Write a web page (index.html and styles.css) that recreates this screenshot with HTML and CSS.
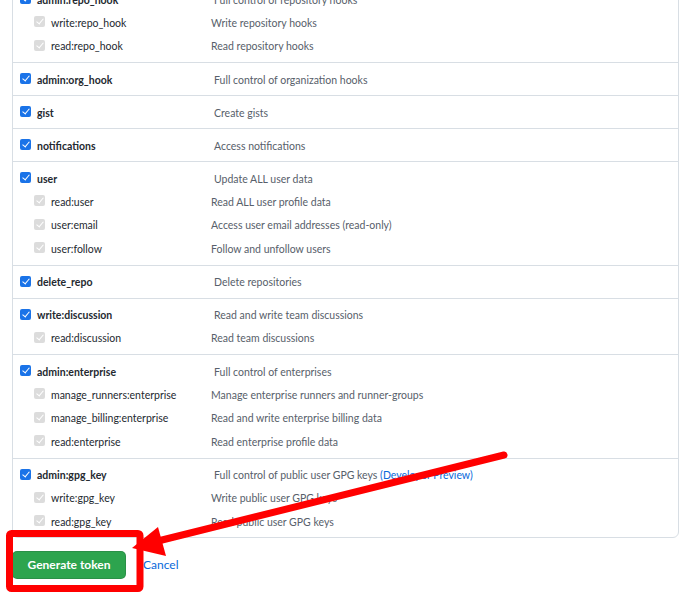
FILE: index.html
```html
<!DOCTYPE html>
<html lang="en">
<head>
<meta charset="utf-8">
<title>New personal access token</title>
<link rel="stylesheet" href="styles.css">
</head>
<body>
<div class="page">
  <div class="scopes">
    <div class="group">
      <div class="row parent"><span class="cb on"></span><span class="name">admin:repo_hook</span><span class="desc">Full control of repository hooks</span></div>
      <div class="row child"><span class="cb off"></span><span class="name">write:repo_hook</span><span class="desc">Write repository hooks</span></div>
      <div class="row child"><span class="cb off"></span><span class="name">read:repo_hook</span><span class="desc">Read repository hooks</span></div>
    </div>
    <div class="group">
      <div class="row parent"><span class="cb on"></span><span class="name">admin:org_hook</span><span class="desc">Full control of organization hooks</span></div>
    </div>
    <div class="group">
      <div class="row parent"><span class="cb on"></span><span class="name">gist</span><span class="desc">Create gists</span></div>
    </div>
    <div class="group">
      <div class="row parent"><span class="cb on"></span><span class="name">notifications</span><span class="desc">Access notifications</span></div>
    </div>
    <div class="group">
      <div class="row parent"><span class="cb on"></span><span class="name">user</span><span class="desc">Update ALL user data</span></div>
      <div class="row child"><span class="cb off"></span><span class="name">read:user</span><span class="desc">Read ALL user profile data</span></div>
      <div class="row child"><span class="cb off"></span><span class="name">user:email</span><span class="desc">Access user email addresses (read-only)</span></div>
      <div class="row child"><span class="cb off"></span><span class="name">user:follow</span><span class="desc">Follow and unfollow users</span></div>
    </div>
    <div class="group">
      <div class="row parent"><span class="cb on"></span><span class="name">delete_repo</span><span class="desc">Delete repositories</span></div>
    </div>
    <div class="group">
      <div class="row parent"><span class="cb on"></span><span class="name">write:discussion</span><span class="desc">Read and write team discussions</span></div>
      <div class="row child"><span class="cb off"></span><span class="name">read:discussion</span><span class="desc">Read team discussions</span></div>
    </div>
    <div class="group">
      <div class="row parent"><span class="cb on"></span><span class="name">admin:enterprise</span><span class="desc">Full control of enterprises</span></div>
      <div class="row child"><span class="cb off"></span><span class="name">manage_runners:enterprise</span><span class="desc">Manage enterprise runners and runner-groups</span></div>
      <div class="row child"><span class="cb off"></span><span class="name">manage_billing:enterprise</span><span class="desc">Read and write enterprise billing data</span></div>
      <div class="row child"><span class="cb off"></span><span class="name">read:enterprise</span><span class="desc">Read enterprise profile data</span></div>
    </div>
    <div class="group last">
      <div class="row parent"><span class="cb on"></span><span class="name">admin:gpg_key</span><span class="desc">Full control of public user GPG keys <a class="link" href="#">(Developer Preview)</a></span></div>
      <div class="row child"><span class="cb off"></span><span class="name">write:gpg_key</span><span class="desc">Write public user GPG keys</span></div>
      <div class="row child"><span class="cb off"></span><span class="name">read:gpg_key</span><span class="desc">Read public user GPG keys</span></div>
    </div>
  </div>
  <div class="actions">
    <button class="btn-primary" type="button">Generate token</button>
    <a class="cancel" href="#">Cancel</a>
  </div>
</div>
<svg class="annotation" width="700" height="597" viewBox="0 0 700 597" aria-hidden="true">
  <rect x="9.5" y="533.5" width="130.5" height="55" rx="2" fill="none" stroke="#ff0000" stroke-width="7"/>
  <line x1="504" y1="455" x2="158" y2="541" stroke="#ff0000" stroke-width="7" stroke-linecap="round"/>
  <polygon points="132,548 158,527 166,556" fill="#ff0000"/>
</svg>
</body>
</html>
```
FILE: styles.css
```css
html, body {
  margin: 0;
  padding: 0;
  background: #ffffff;
  overflow: hidden;
}
body {
  width: 700px;
  height: 597px;
  position: relative;
  font-family: Lato, "Open Sans", sans-serif;
  font-size: 10.5px;
  color: #24292f;
}
.page {
  padding: 0 21px 0 12px;
}
.scopes {
  margin-top: -18px;
  border: 1px solid #d8dee4;
  border-radius: 6px;
}
.group {
  padding: 5px 0 4px;
  border-bottom: 1px solid #d8dee4;
}
.group.last {
  border-bottom: none;
  padding-bottom: 3px;
}
.row {
  display: flex;
  align-items: center;
}
.row.parent {
  height: 23px;
  padding-left: 7px;
}
.row.child {
  height: 23.5px;
  padding-left: 21px;
}
.cb {
  width: 11px;
  height: 11px;
  border-radius: 2px;
  flex: none;
  position: relative;
  margin-top: -2px;
}
.cb::after {
  content: "";
  position: absolute;
  left: 3.5px;
  top: 1px;
  width: 3px;
  height: 6px;
  border: solid #ffffff;
  border-width: 0 1.8px 1.8px 0;
  transform: rotate(40deg);
}
.cb.on {
  background: #1a73e8;
}
.cb.off {
  background: #dcdcdc;
}
.name {
  margin-left: 6px;
}
.parent .name {
  width: 177px;
  font-weight: 700;
  color: #24292f;
}
.child .name {
  width: 160px;
  color: #24292f;
}
.desc {
  color: #57606a;
}
.link {
  color: #0969da;
  text-decoration: none;
}
.actions {
  display: flex;
  align-items: center;
  margin-top: 13px;
  gap: 17px;
}
.btn-primary {
  height: 28px;
  width: 114px;
  padding: 0;
  border: 1px solid rgba(27, 31, 36, 0.15);
  border-radius: 5px;
  background: #2da44e;
  color: #ffffff;
  font-family: Lato, "Open Sans", sans-serif;
  font-size: 12px;
  font-weight: 700;
}
.cancel {
  color: #0969da;
  text-decoration: none;
  font-size: 12px;
}
.annotation {
  position: absolute;
  left: 0;
  top: 0;
  pointer-events: none;
}
```
